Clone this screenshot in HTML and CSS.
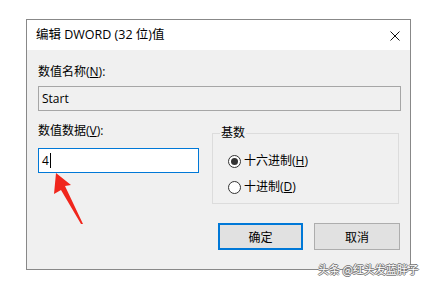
FILE: index.html
```html
<!DOCTYPE html>
<html lang="zh-CN">
<head>
<meta charset="utf-8">
<title>编辑 DWORD (32 位)值</title>
<link rel="stylesheet" href="styles.css">
</head>
<body>
<div class="page">
<div class="dialog">
  <div class="titlebar">
    <span class="title">编辑 DWORD (32 位)值</span>
    <svg class="close" width="10" height="10" viewBox="0 0 10 10"><path d="M0.5 0.5 L9.5 9.5 M9.5 0.5 L0.5 9.5" stroke="#111" stroke-width="1" fill="none"/></svg>
  </div>
  <div class="content">
    <div class="label first">数值名称(<u>N</u>):</div>
    <div class="field name">Start</div>
    <div class="row">
      <div class="left">
        <div class="label">数值数据(<u>V</u>):</div>
        <div class="field data"><span>4</span><span class="caret"></span></div>
      </div>
      <fieldset class="group">
        <legend>基数</legend>
        <div class="radio"><span class="dot checked"></span><span>十六进制(<u>H</u>)</span></div>
        <div class="radio"><span class="dot"></span><span>十进制(<u>D</u>)</span></div>
      </fieldset>
    </div>
    <div class="buttons">
      <div class="btn default">确定</div>
      <div class="btn">取消</div>
    </div>
  </div>
  <svg class="arrow" width="40" height="60" viewBox="0 0 40 60"><polygon points="16,1 31,13 25,14 43,52 41,52 21,18 14,22" fill="#f0261c"/></svg>
</div>
<div class="watermark">头条 @红头发蓝胖子</div>
</div>
</body>
</html>
```
FILE: styles.css
```css
* { box-sizing: border-box; }
html, body { margin: 0; padding: 0; background: #ffffff; }
body {
  font-family: "Open Sans", "Noto Sans CJK SC", sans-serif;
  font-size: 12px;
  color: #000;
}
.page { position: relative; height: 283px; padding-top: 19px; }
u { text-decoration: underline; text-underline-offset: 1px; }
.dialog {
  position: relative;
  margin: 0 0 0 26px;
  width: 385px;
  height: 251px;
  border: 1px solid #888888;
  background: #f0f0f0;
}
.titlebar {
  height: 30px;
  background: #ffffff;
  display: flex;
  align-items: center;
  justify-content: space-between;
  padding: 0 10px 0 9px;
  font-size: 12.5px;
}
.title { line-height: 16px; }
.close { display: block; margin-top: 1px; }
.content {
  padding: 0 9px 0 11px;
}
.label { line-height: 16px; height: 16px; }
.label.first { margin-top: 14px; }
.field {
  height: 25px;
  border: 1px solid #a6a6a6;
  display: flex;
  align-items: center;
  padding-left: 3px;
  line-height: 16px;
}
.field.name { margin-top: 6px; width: 363px; background: #f0f0f0; }
.row { display: flex; margin-top: 12px; }
.left { width: 161px; }
.field.data {
  margin-top: 9px;
  background: #ffffff;
  border-color: #0078d7;
  width: 161px;
}
.caret { display: inline-block; width: 1px; height: 15px; background: #000; margin-left: 1px; }
.group {
  margin: 2px 0 0 13px;
  width: 187px;
  height: 79px;
  border: 1px solid #dcdcdc;
  padding: 0 0 0 15px;
}
.group legend {
  padding: 0 1px;
  margin-left: -8px;
  line-height: 16px;
}
.radio {
  display: flex;
  align-items: center;
  height: 16px;
  line-height: 16px;
}
.radio:first-of-type { margin-top: 12px; }
.radio + .radio { margin-top: 10px; }
.dot {
  width: 13px;
  height: 13px;
  border: 1px solid #333;
  border-radius: 50%;
  background: #fff;
  margin-right: 3px;
  display: flex;
  align-items: center;
  justify-content: center;
}
.dot.checked::after {
  content: "";
  width: 7px;
  height: 7px;
  border-radius: 50%;
  background: #333;
}
.buttons {
  display: flex;
  justify-content: flex-end;
  gap: 11px;
  margin-top: 19px;
  padding-right: 1px;
}
.btn {
  width: 86px;
  height: 27px;
  background: #e1e1e1;
  border: 1px solid #adadad;
  display: flex;
  align-items: center;
  justify-content: center;
}
.btn.default { border: 2px solid #0078d7; width: 85px; }
.arrow {
  position: absolute;
  left: 13px;
  top: 152px;
  overflow: visible;
}
.watermark {
  position: absolute;
  left: 318px;
  top: 262px;
  font-family: "Noto Sans CJK SC", sans-serif;
  font-size: 11px;
  color: #ffffff;
  text-shadow: 1px 0 0 #777, -1px 0 0 #777, 0 1px 0 #777, 0 -1px 0 #777;
  line-height: 14px;
  white-space: nowrap;
}
```
